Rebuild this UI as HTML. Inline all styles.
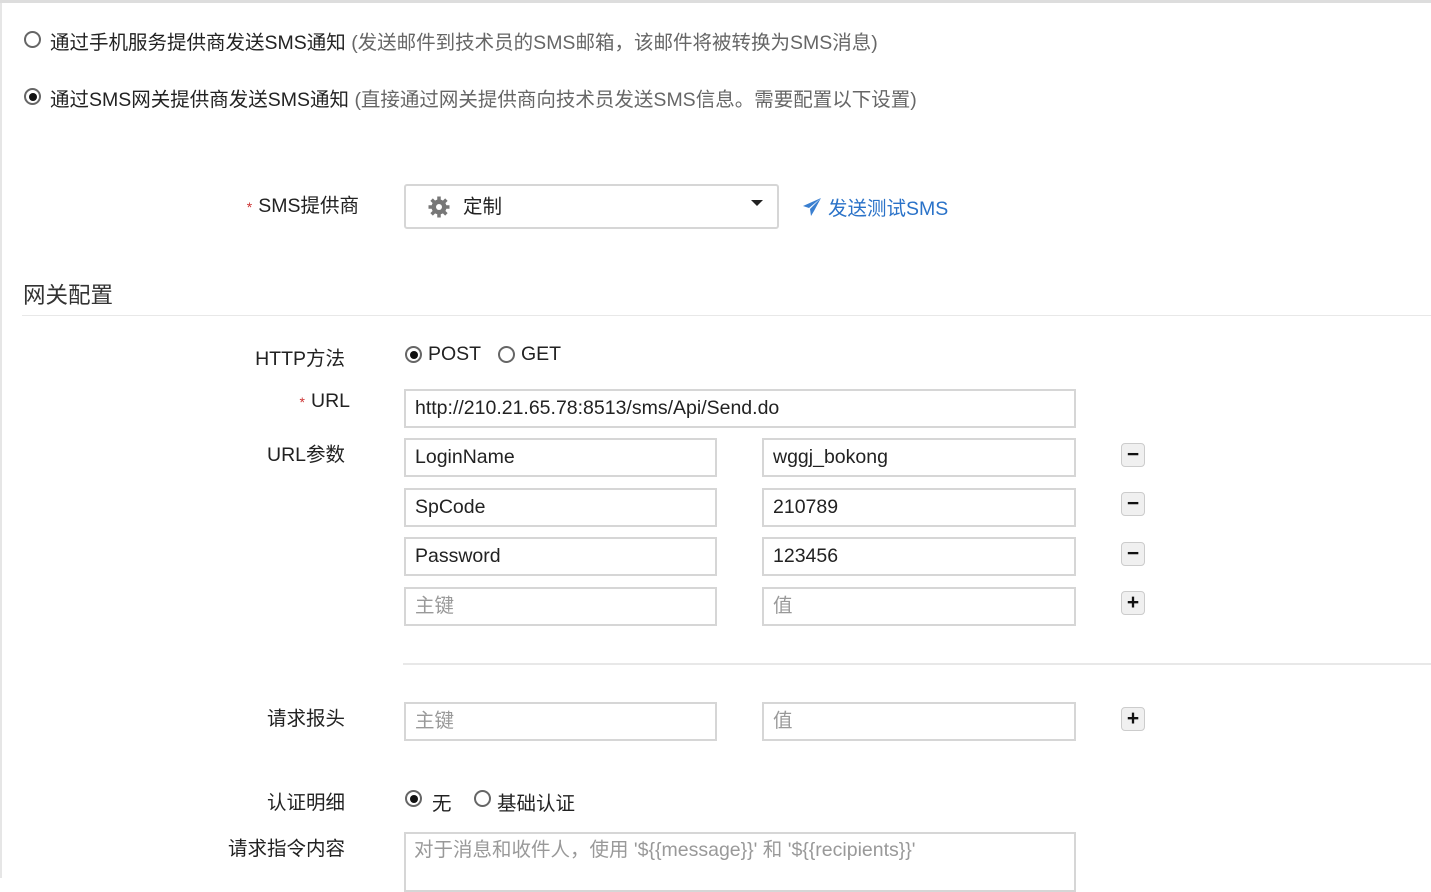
<!DOCTYPE html>
<html><head><meta charset="utf-8"><style>
body{margin:0;width:1431px;height:878px;overflow:hidden;background:#fff;font-family:"Liberation Sans","Noto Sans CJK SC",sans-serif;color:#222;position:relative}
.a{position:absolute;white-space:nowrap}
.t{font-size:19.5px}
.g{color:#666}
.lbl{position:absolute;font-size:19.5px;text-align:right;width:200px;white-space:nowrap}
.req{color:#c33;font-size:14px;margin-right:6px}
.in{position:absolute;box-sizing:border-box;border:2px solid #d6d6d6;height:39px;font-size:19.5px;padding:0 9px;line-height:35px;white-space:nowrap;color:#222}
.ph{color:#999}
.btn{position:absolute;width:24px;height:24px;box-sizing:border-box;border:1px solid #ccc;border-radius:4px;background:#f0f0f0;font-size:21px;font-weight:bold;line-height:21px;text-align:center;color:#111}
.rad{position:absolute;width:17px;height:17px;box-sizing:border-box;border:2px solid #666;border-radius:50%}
.rad.on::after{content:"";position:absolute;left:2.5px;top:2.5px;width:8px;height:8px;border-radius:50%;background:#111}
.hr{position:absolute;height:1px;background:#e8e8e8;right:0}
</style></head><body>
<div class="a" style="left:0;top:0;width:1431px;height:3px;background:#ddd"></div>
<div class="a" style="left:0;top:3px;width:2px;height:875px;background:#e6e6e6"></div>

<div class="rad" style="left:24px;top:31px"></div>
<div class="a t" style="left:50px;top:26px">通过手机服务提供商发送SMS通知 <span class="g">(发送邮件到技术员的SMS邮箱，该邮件将被转换为SMS消息)</span></div>
<div class="rad on" style="left:24px;top:88px"></div>
<div class="a t" style="left:50px;top:83px">通过SMS网关提供商发送SMS通知 <span class="g">(直接通过网关提供商向技术员发送SMS信息。需要配置以下设置)</span></div>

<div class="lbl" style="left:159px;top:189px"><span class="req">*</span>SMS提供商</div>
<div class="in" style="left:404px;top:184px;width:375px;height:45px;line-height:43px;border-radius:3px;padding-left:57px">定制</div>
<svg class="a" style="left:427px;top:195px" width="24" height="24" viewBox="0 0 24 24"><g fill="#777"><circle cx="12" cy="12" r="7.5"/><g stroke="#777" stroke-width="3.5"><line x1="12" y1="1.5" x2="12" y2="22.5"/><line x1="1.5" y1="12" x2="22.5" y2="12"/><line x1="4.6" y1="4.6" x2="19.4" y2="19.4"/><line x1="19.4" y1="4.6" x2="4.6" y2="19.4"/></g></g><circle cx="12" cy="12" r="3" fill="#fff"/></svg>
<div class="a" style="left:751px;top:200px;width:0;height:0;border-left:6px solid transparent;border-right:6px solid transparent;border-top:6px solid #222"></div>
<svg class="a" style="left:802px;top:197px" width="20" height="20" viewBox="0 0 20 20"><path d="M19 1 L1 9 L7 11 Z M19 1 L8 12 L9 19 L12 14 Z" fill="#3a7fd0"/></svg>
<div class="a t" style="left:828px;top:192px;color:#2a72c8">发送测试SMS</div>

<div class="a" style="left:23px;top:278px;font-size:22.5px;color:#333">网关配置</div>
<div class="hr" style="left:22px;top:315px"></div>

<div class="lbl" style="left:145px;top:342px">HTTP方法</div>
<div class="rad on" style="left:405px;top:346px"></div>
<div class="a t" style="left:428px;top:343px">POST</div>
<div class="rad" style="left:498px;top:346px"></div>
<div class="a t" style="left:521px;top:343px">GET</div>

<div class="lbl" style="left:150px;top:390px"><span class="req">*</span>URL</div>
<div class="in" style="left:404px;top:389px;width:672px">http://210.21.65.78:8513/sms/Api/Send.do</div>

<div class="lbl" style="left:145px;top:438px">URL参数</div>
<div class="in" style="left:404px;top:438px;width:313px">LoginName</div>
<div class="in" style="left:762px;top:438px;width:314px">wggj_bokong</div>
<div class="btn" style="left:1121px;top:443px">−</div>
<div class="in" style="left:404px;top:488px;width:313px">SpCode</div>
<div class="in" style="left:762px;top:488px;width:314px">210789</div>
<div class="btn" style="left:1121px;top:492px">−</div>
<div class="in" style="left:404px;top:537px;width:313px">Password</div>
<div class="in" style="left:762px;top:537px;width:314px">123456</div>
<div class="btn" style="left:1121px;top:542px">−</div>
<div class="in ph" style="left:404px;top:587px;width:313px">主键</div>
<div class="in ph" style="left:762px;top:587px;width:314px">值</div>
<div class="btn" style="left:1121px;top:591px">+</div>

<div class="hr" style="left:403px;top:663px;height:2px"></div>

<div class="lbl" style="left:145px;top:702px">请求报头</div>
<div class="in ph" style="left:404px;top:702px;width:313px">主键</div>
<div class="in ph" style="left:762px;top:702px;width:314px">值</div>
<div class="btn" style="left:1121px;top:707px">+</div>

<div class="lbl" style="left:145px;top:786px">认证明细</div>
<div class="rad on" style="left:405px;top:790px"></div>
<div class="a t" style="left:432px;top:787px">无</div>
<div class="rad" style="left:474px;top:790px"></div>
<div class="a t" style="left:497px;top:787px">基础认证</div>

<div class="lbl" style="left:145px;top:832px">请求指令内容</div>
<div class="in ph" style="left:404px;top:832px;width:672px;height:60px;padding-left:8px;line-height:32px">对于消息和收件人，使用 '${{message}}' 和 '${{recipients}}'</div>
</body></html>
